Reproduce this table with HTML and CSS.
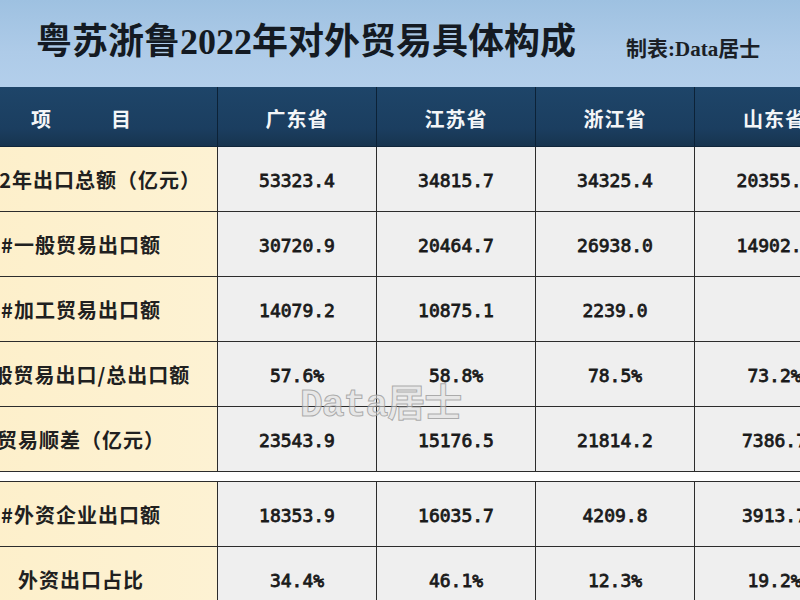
FILE: index.html
```html
<!DOCTYPE html>
<html lang="zh-CN">
<head>
<meta charset="utf-8">
<title>粤苏浙鲁2022年对外贸易具体构成</title>
<link rel="stylesheet" href="styles.css">
</head>
<body>
<div class="page">
  <header class="title-band">
    <h1 class="title">粤苏浙鲁2022年对外贸易具体构成</h1>
    <span class="credit">制表:Data居士</span>
  </header>
  <div class="table">
    <div class="row head">
      <div class="cell item">项　　　目</div>
      <div class="cell">广东省</div>
      <div class="cell">江苏省</div>
      <div class="cell">浙江省</div>
      <div class="cell">山东省</div>
    </div>
    <div class="row">
      <div class="cell item">2022年出口总额（亿元）</div>
      <div class="cell num">53323.4</div>
      <div class="cell num">34815.7</div>
      <div class="cell num">34325.4</div>
      <div class="cell num">20355.7</div>
    </div>
    <div class="row">
      <div class="cell item">#一般贸易出口额</div>
      <div class="cell num">30720.9</div>
      <div class="cell num">20464.7</div>
      <div class="cell num">26938.0</div>
      <div class="cell num">14902.4</div>
    </div>
    <div class="row">
      <div class="cell item">#加工贸易出口额</div>
      <div class="cell num">14079.2</div>
      <div class="cell num">10875.1</div>
      <div class="cell num">2239.0</div>
      <div class="cell num"></div>
    </div>
    <div class="row">
      <div class="cell item">一般贸易出口/总出口额</div>
      <div class="cell num">57.6%</div>
      <div class="cell num">58.8%</div>
      <div class="cell num">78.5%</div>
      <div class="cell num">73.2%</div>
    </div>
    <div class="row">
      <div class="cell item">贸易顺差（亿元）</div>
      <div class="cell num">23543.9</div>
      <div class="cell num">15176.5</div>
      <div class="cell num">21814.2</div>
      <div class="cell num">7386.7</div>
    </div>
    <div class="spacer"></div>
    <div class="row first-after-gap">
      <div class="cell item">#外资企业出口额</div>
      <div class="cell num">18353.9</div>
      <div class="cell num">16035.7</div>
      <div class="cell num">4209.8</div>
      <div class="cell num">3913.7</div>
    </div>
    <div class="row">
      <div class="cell item">外资出口占比</div>
      <div class="cell num">34.4%</div>
      <div class="cell num">46.1%</div>
      <div class="cell num">12.3%</div>
      <div class="cell num">19.2%</div>
    </div>
  </div>
  <div class="watermark">Data居士</div>
</div>
</body>
</html>
```

FILE: styles.css
```css
html, body {
  margin: 0;
  padding: 0;
  background: #ffffff;
}
body {
  width: 800px;
  height: 600px;
  overflow: hidden;
  font-family: "Noto Sans CJK SC", sans-serif;
}
.page {
  position: relative;
  width: 800px;
  height: 600px;
  overflow: hidden;
}
.title-band {
  height: 87px;
  display: flex;
  align-items: center;
  padding-left: 36px;
  background: linear-gradient(180deg, #9ec1e1 0%, #aecbe8 60%, #b3cfeb 100%);
  box-sizing: border-box;
}
.title {
  margin: 0;
  font-family: "Liberation Serif", "Noto Sans CJK SC", serif;
  font-size: 36px;
  font-weight: 700;
  color: #141a22;
  letter-spacing: 0;
  line-height: 1;
  padding-bottom: 4px;
}
.credit {
  margin-left: 50px;
  font-family: "Liberation Serif", "Noto Sans CJK SC", serif;
  font-size: 21px;
  font-weight: 700;
  color: #1b1f26;
  padding-top: 6px;
}
.table {
  margin-left: -55px;
  width: 910px;
}
.row {
  display: grid;
  grid-template-columns: 273px 159px 159px 159px 160px;
  height: 65px;
}
.cell {
  box-sizing: border-box;
  border-right: 1px solid #2c2c2c;
  border-bottom: 1px solid #2c2c2c;
  display: flex;
  align-items: center;
  justify-content: center;
  background: #efefef;
  color: #1e1e1e;
  white-space: nowrap;
  overflow: hidden;
}
.item {
  background: linear-gradient(90deg, #fdefc9 0%, #fdf2d3 100%);
  font-size: 20px;
  font-weight: 700;
  letter-spacing: 1px;
  color: #202020;
}
.num {
  font-family: "DejaVu Sans Mono", monospace;
  font-size: 18px;
  font-weight: 400;
  color: #1a1a1a;
  -webkit-text-stroke: 0.8px #1a1a1a;
  padding-top: 2px;
}
.head {
  height: 60px;
}
.head .cell {
  background: linear-gradient(180deg, #1e4569 0%, #1b3e60 70%, #17344f 100%);
  border-right: 1px solid #0c2237;
  border-bottom: 1px solid #10263b;
  color: #f4f6f8;
  font-size: 20px;
  font-weight: 700;
  letter-spacing: 1px;
  padding-top: 4px;
}
.head .item {
  letter-spacing: 0;
}
.spacer {
  height: 9px;
  background: #ffffff;
}
.first-after-gap {
  height: 66px;
}
.first-after-gap .cell {
  border-top: 1px solid #2c2c2c;
}
.watermark {
  position: absolute;
  left: 300px;
  top: 387px;
  font-family: "Liberation Mono", "Noto Sans CJK SC", monospace;
  font-size: 38px;
  font-weight: 700;
  color: rgba(225, 225, 225, 0.55);
  -webkit-text-stroke: 1px rgba(150, 150, 150, 0.75);
  line-height: 1;
  letter-spacing: -1px;
}
```
